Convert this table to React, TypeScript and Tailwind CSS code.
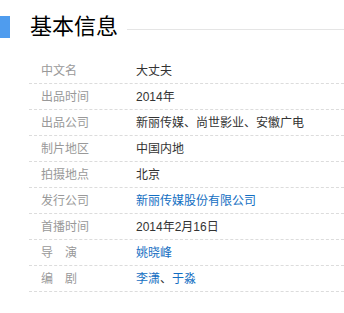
import React from 'react';

interface InfoItem {
  label: string;
  value: string[];
  link?: boolean;
}

const items: InfoItem[] = [
  { label: '中文名', value: ['大丈夫'] },
  { label: '出品时间', value: ['2014年'] },
  { label: '出品公司', value: ['新丽传媒、尚世影业、安徽广电'] },
  { label: '制片地区', value: ['中国内地'] },
  { label: '拍摄地点', value: ['北京'] },
  { label: '发行公司', value: ['新丽传媒股份有限公司'], link: true },
  { label: '首播时间', value: ['2014年2月16日'] },
  { label: '导\u3000演', value: ['姚晓峰'], link: true },
  { label: '编\u3000剧', value: ['李潇', '于淼'], link: true },
];

export default function App() {
  return (
    <div
      className="w-[344px] h-[313px] bg-white overflow-hidden"
      style={{ fontFamily: '"Liberation Sans", "Noto Sans CJK SC", sans-serif' }}
    >
      <div className="flex items-center h-[22px] mt-[16px]">
        <div className="w-[10px] h-[22px] bg-[#4f9cee]" />
        <h2 className="ml-[20px] text-[22px] leading-[22px] text-black">基本信息</h2>
        <div className="flex-1 h-px bg-[#e5e5e5] ml-[9px] mt-[4px]" />
      </div>
      <dl className="mt-[20px] ml-[29px]">
        {items.map((item, i) => (
          <div
            key={i}
            className="flex items-center h-[26px] border-b border-dashed border-[#dcdcdc] text-[12px]"
          >
            <dt className="w-[107px] pl-[12px] text-[#999]">{item.label}</dt>
            <dd className={item.link ? 'text-[#136ec2]' : 'text-[#333]'}>
              {item.value.map((v, j) => (
                <React.Fragment key={j}>
                  {j > 0 && <span className="text-[#333]">、</span>}
                  {v}
                </React.Fragment>
              ))}
            </dd>
          </div>
        ))}
      </dl>
    </div>
  );
}
